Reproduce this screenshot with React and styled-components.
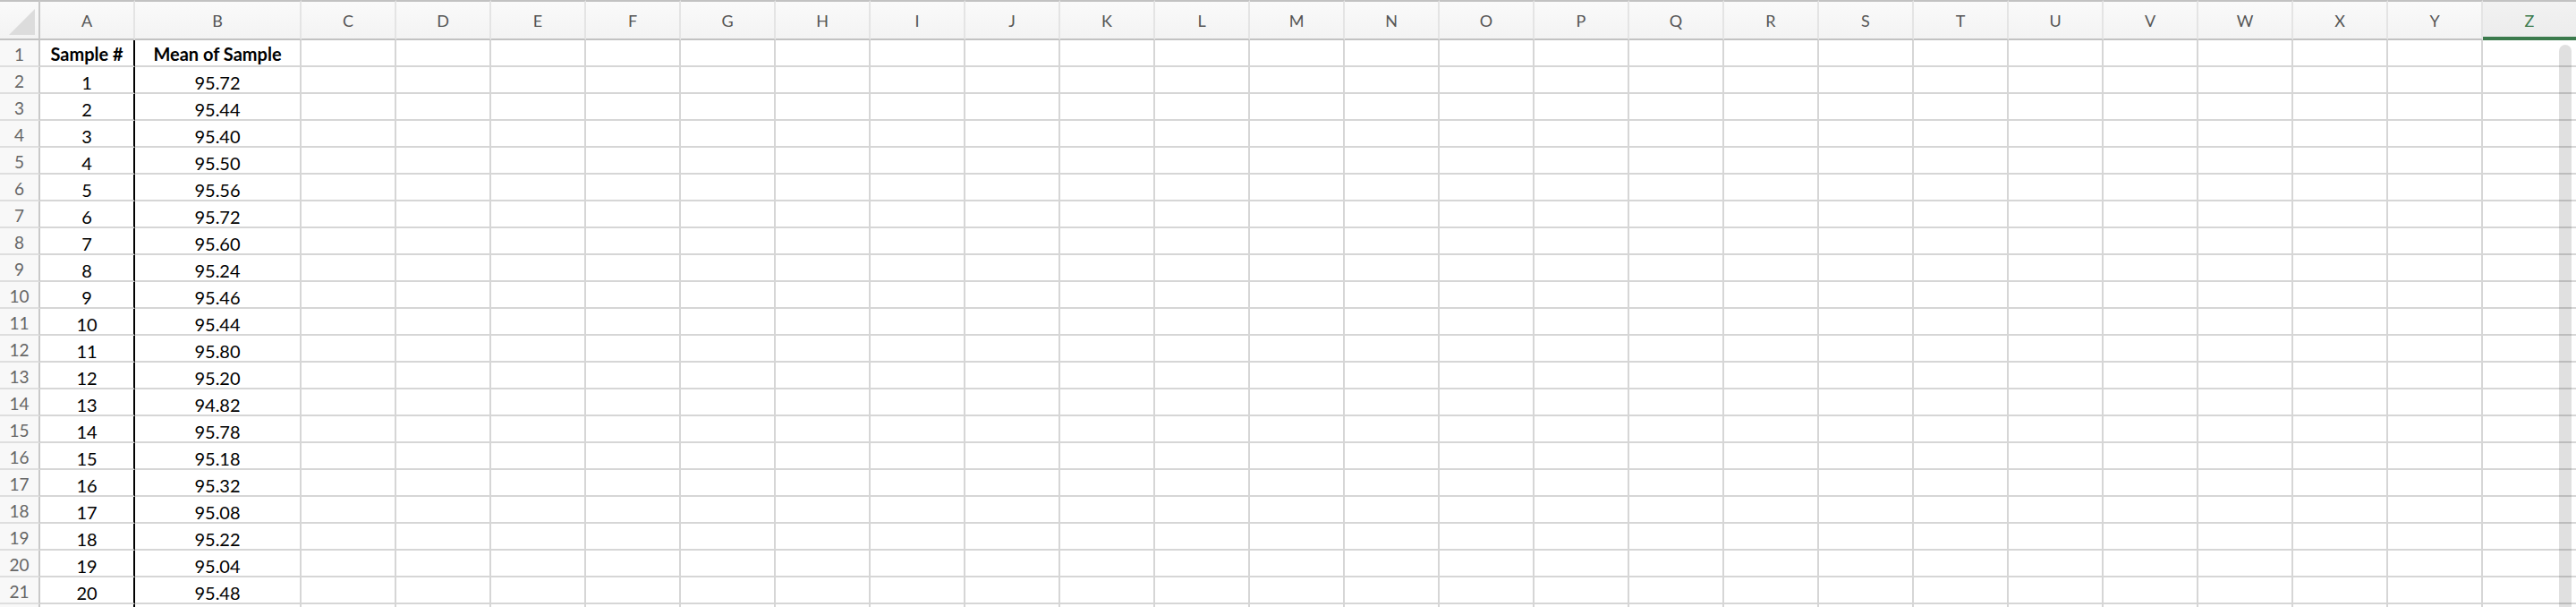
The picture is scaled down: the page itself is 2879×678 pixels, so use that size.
import React from "react";
import styled, { createGlobalStyle } from "styled-components";

const GlobalStyle = createGlobalStyle`
  html, body {
    margin: 0;
    padding: 0;
    background: #ffffff;
    overflow: hidden;
  }
  body {
    font-family: Lato, "Open Sans", "Liberation Sans", sans-serif;
  }
`;

const COLUMNS = "ABCDEFGHIJKLMNOPQRSTUVWXYZ".split("");
const SELECTED_COL = "Z";

const MEANS = [
  "95.72", "95.44", "95.40", "95.50", "95.56", "95.72", "95.60", "95.24",
  "95.46", "95.44", "95.80", "95.20", "94.82", "95.78", "95.18", "95.32",
  "95.08", "95.22", "95.04", "95.48",
];

// 21 full rows fit, the 22nd only shows its top edge
const VISIBLE_ROWS = 21;
const ROW_COUNT = 22;

const Sheet = styled.div`
  position: relative;
  width: 2879px;
  height: 678px;
  overflow: hidden;
  display: grid;
  grid-template-columns: 45px 106px 186px repeat(24, 106px);
  grid-template-rows: 45px repeat(${ROW_COUNT}, 30px);
  background: #ffffff;
`;

const Corner = styled.div`
  position: relative;
  box-sizing: border-box;
  border-top: 2px solid #c2c2c2;
  border-right: 2px solid #c9c9c9;
  border-bottom: 2px solid #c2c2c2;
  background: linear-gradient(#fafafa, #f3f3f3);

  &::after {
    content: "";
    position: absolute;
    left: 10px;
    top: 8px;
    width: 29px;
    height: 29px;
    background: #dcdcdc;
    clip-path: polygon(100% 0, 100% 100%, 0 100%);
  }
`;

const ColHeader = styled.div`
  box-sizing: border-box;
  display: flex;
  align-items: center;
  justify-content: center;
  border-top: 2px solid #c2c2c2;
  border-right: 2px solid #e4e4e4;
  border-bottom: ${(p) => (p.$selected ? "4px solid #3b7a4c" : "2px solid #c2c2c2")};
  padding-top: ${(p) => (p.$selected ? "2px" : "0")};
  background: ${(p) =>
    p.$selected ? "linear-gradient(#f2f2f2, #ececec)" : "linear-gradient(#fafafa, #f3f3f3)"};
  color: ${(p) => (p.$selected ? "#3b7a4c" : "#555555")};
  font-size: 18px;
  white-space: nowrap;
`;

const RowHeader = styled.div`
  box-sizing: border-box;
  display: flex;
  align-items: flex-end;
  justify-content: center;
  padding-bottom: 3px;
  border-right: 2px solid #c9c9c9;
  border-bottom: 2px solid #dedede;
  background: #f8f8f8;
  color: #666666;
  font-size: 19px;
  line-height: 19px;
`;

const Cell = styled.div`
  box-sizing: border-box;
  display: flex;
  align-items: flex-end;
  justify-content: center;
  padding-bottom: ${(p) => (p.$bold ? "3px" : "1px")};
  border-right: 2px solid ${(p) => (p.$edge ? "#000000" : "#d6d6d6")};
  border-bottom: 2px solid #d6d6d6;
  color: #000000;
  font-size: 20px;
  line-height: 20px;
  font-weight: ${(p) => (p.$bold ? 700 : 400)};
  white-space: nowrap;
`;

const Scrollbar = styled.div`
  position: absolute;
  left: 2860px;
  top: 50px;
  bottom: 0;
  width: 14px;
  border-radius: 7px 7px 0 0;
  background: rgba(0, 0, 0, 0.12);
`;

function cellText(row, col) {
  if (row === 1) {
    if (col === "A") return "Sample #";
    if (col === "B") return "Mean of Sample";
    return "";
  }
  const i = row - 2;
  if (i >= MEANS.length) return "";
  if (col === "A") return String(i + 1);
  if (col === "B") return MEANS[i];
  return "";
}

function App() {
  const rows = Array.from({ length: ROW_COUNT }, (_, i) => i + 1);

  return (
    <>
      <GlobalStyle />
      <Sheet>
        <Corner />
        {COLUMNS.map((c) => (
          <ColHeader key={c} $selected={c === SELECTED_COL}>
            {c}
          </ColHeader>
        ))}
        {rows.map((r) => (
          <React.Fragment key={r}>
            <RowHeader>{r <= VISIBLE_ROWS ? r : ""}</RowHeader>
            {COLUMNS.map((c) => (
              <Cell key={c} $bold={r === 1} $edge={c === "A"}>
                {cellText(r, c)}
              </Cell>
            ))}
          </React.Fragment>
        ))}
        <Scrollbar />
      </Sheet>
    </>
  );
}

export default App;
